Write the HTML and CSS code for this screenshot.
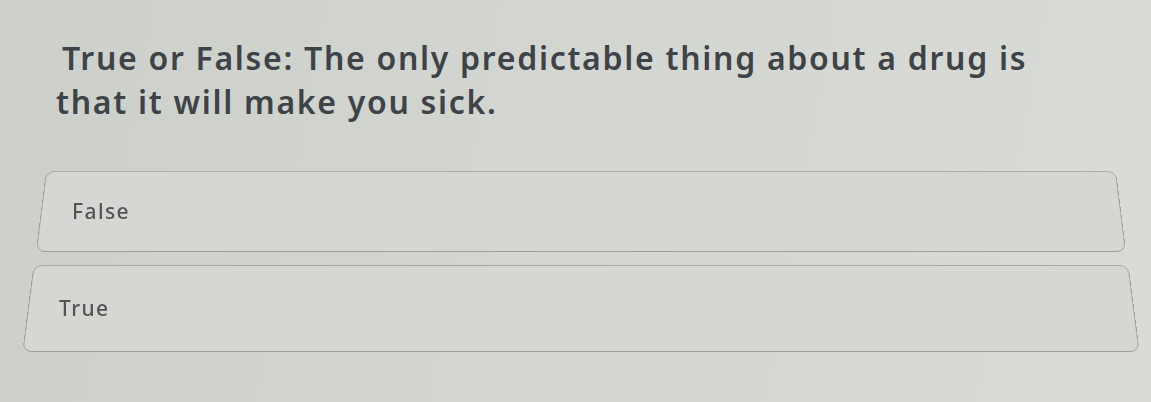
FILE: index.html
```html
<!DOCTYPE html>
<html lang="en">
<head>
  <meta charset="UTF-8" />
  <meta name="viewport" content="width=device-width, initial-scale=1.0"/>
  <title>Quiz Question</title>
  <link rel="stylesheet" href="styles.css">
</head>
<body>
  <main class="quiz">
    <h1 class="question">True or False: The only predictable thing about a drug is that it will make you sick.</h1>

    <div class="answers">
      <button class="answer answer-first" type="button">False</button>
      <button class="answer answer-second" type="button">True</button>
    </div>
  </main>
</body>
</html>
```

FILE: styles.css
```css
html, body {
  margin: 0;
  height: 100%;
}

body {
  font-family: "Noto Sans", "Open Sans", Arial, sans-serif;
  background: linear-gradient(100deg, #cdcfca 0%, #d3d5d0 45%, #d9dbd6 100%);
  color: #3d4346;
  overflow: hidden;
}

.quiz {
  padding-top: 36px;
}

.question {
  margin: 0;
  padding-left: 56px;
  text-indent: 6px;
  max-width: 1010px;
  font-size: 32px;
  font-weight: 600;
  line-height: 44px;
  letter-spacing: 1.7px;
}

.answers {
  display: flex;
  flex-direction: column;
  align-items: center;
  gap: 14px;
  margin-top: 46px;
  padding-left: 11px;
}

.answer {
  position: relative;
  isolation: isolate;
  display: block;
  height: 82px;
  padding: 0 31px;
  text-align: left;
  font-family: inherit;
  font-size: 21px;
  font-weight: 500;
  letter-spacing: 1.4px;
  color: #505557;
  background: none;
  border: none;
}

/* the frame is tilted a little, the label stays upright */
.answer::before {
  content: "";
  position: absolute;
  inset: 0;
  z-index: -1;
  background: #d5d7d2;
  border: 1.5px solid #9c9f9b;
  border-radius: 9px;
  transform: perspective(600px) rotateX(8deg);
}

.answer-first {
  width: 1080px;
}

.answer-second {
  width: 1106px;
  height: 88px;
  margin-top: -2px;
}
```
